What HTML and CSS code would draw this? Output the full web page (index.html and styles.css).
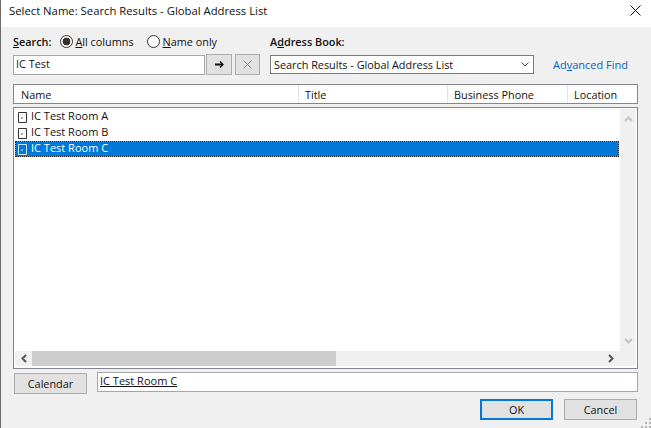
FILE: index.html
```html
<!DOCTYPE html>
<html lang="en">

<head>
    <meta charset="UTF-8">
    <title>Select Name</title>
    <link rel="stylesheet" href="styles.css">
</head>

<body>
    <div class="dialog">
        <div class="titlebar">
            <span class="title">Select Name: Search Results - Global Address List</span>
            <svg class="close" width="11" height="11" viewBox="0 0 11 11"><path d="M.5.5l10 10M10.5.5l-10 10" stroke="#111" fill="none"/></svg>
        </div>

        <div class="content">
            <div class="labels">
                <div class="search-labels">
                    <b class="label"><u>S</u>earch:</b>
                    <span class="radio checked"></span>
                    <span class="radio-text"><u>A</u>ll columns</span>
                    <span class="radio second"></span>
                    <span class="radio-text"><u>N</u>ame only</span>
                </div>
                <b class="label">A<u>d</u>dress Book:</b>
            </div>

            <div class="controls">
                <div class="search-input">IC Test</div>
                <button class="icon-btn">
                    <svg width="9" height="7" viewBox="0 0 9 7"><path d="M0 3.500h7" stroke="#111" stroke-width="2" fill="none"/><path d="M5 .5l3 3-3 3" stroke="#111" stroke-width="1.300" fill="none"/></svg>
                </button>
                <button class="icon-btn clear">
                    <svg width="9" height="9" viewBox="0 0 9 9"><path d="M.5.5l8 8M8.5.5l-8 8" stroke="#7d8a98" fill="none"/></svg>
                </button>
                <div class="select">
                    <span>Search Results - Global Address List</span>
                    <svg width="8" height="5" viewBox="0 0 8 5"><path d="M.5.5L4 4 7.500.5" stroke="#444" fill="none"/></svg>
                </div>
                <a class="advanced">Ad<u>v</u>anced Find</a>
            </div>

            <div class="header">
                <div class="col col-name">Name</div>
                <div class="col col-title">Title</div>
                <div class="col col-phone">Business Phone</div>
                <div class="col col-location">Location</div>
            </div>

            <div class="list">
                <div class="list-main">
                    <div class="rows">
                        <div class="row">
                            <svg class="entry-icon" width="9" height="11" viewBox="0 0 9 11"><path d="M.5.5h8v10h-8z" fill="none" stroke="#333"/><path d="M3 6h2" stroke="#555"/></svg>
                            <span class="row-text">IC Test Room A</span>
                        </div>
                        <div class="row">
                            <svg class="entry-icon" width="9" height="11" viewBox="0 0 9 11"><path d="M.5.5h8v10h-8z" fill="none" stroke="#333"/><path d="M3 6h2" stroke="#555"/></svg>
                            <span class="row-text">IC Test Room B</span>
                        </div>
                        <div class="row selected">
                            <svg class="entry-icon" width="9" height="11" viewBox="0 0 9 11"><path d="M.5.5h8v10h-8z" fill="none" stroke="#cfe4f7"/><path d="M3 6h2" stroke="#cfe4f7"/></svg>
                            <span class="row-text">IC Test Room C</span>
                        </div>
                    </div>
                    <div class="vscroll">
                        <svg width="9" height="6" viewBox="0 0 9 6"><path d="M1 5l3.500-3.500L8 5" stroke="#c4c4c4" stroke-width="2" fill="none"/></svg>
                        <svg width="9" height="6" viewBox="0 0 9 6"><path d="M1 1l3.500 3.500L8 1" stroke="#c4c4c4" stroke-width="2" fill="none"/></svg>
                    </div>
                </div>
                <div class="hscroll">
                    <div class="arrow-box">
                        <svg width="6" height="9" viewBox="0 0 6 9"><path d="M5 1L1.500 4.500 5 8" stroke="#555" stroke-width="2" fill="none"/></svg>
                    </div>
                    <div class="thumb"></div>
                    <div class="arrow-box end">
                        <svg width="6" height="9" viewBox="0 0 6 9"><path d="M1 1l3.500 3.500L1 8" stroke="#555" stroke-width="2" fill="none"/></svg>
                    </div>
                </div>
            </div>

            <div class="recipient">
                <button class="btn">Calendar</button>
                <div class="recipient-input"><u>IC Test Room C</u></div>
            </div>

            <div class="actions">
                <button class="btn default">OK</button>
                <button class="btn">Cancel</button>
            </div>
        </div>

        <svg class="grip" width="10" height="10" viewBox="0 0 10 10" fill="#b5b5b5">
            <rect x="8" y="0" width="2" height="2"/>
            <rect x="4" y="4" width="2" height="2"/>
            <rect x="8" y="4" width="2" height="2"/>
            <rect x="0" y="8" width="2" height="2"/>
            <rect x="4" y="8" width="2" height="2"/>
            <rect x="8" y="8" width="2" height="2"/>
        </svg>
    </div>
</body>

</html>
```

FILE: styles.css
```css
* {
    margin: 0;
    padding: 0;
    box-sizing: border-box;
    font-family: "Open Sans", "Noto Sans", sans-serif;
}

html,
body {
    width: 651px;
    height: 428px;
    overflow: hidden;
}

.dialog {
    position: relative;
    height: 428px;
    background: #f0f0f0;
    border-left: 1px solid #6b6b6b;
    font-size: 10.85px;
    color: #111;
}

.titlebar {
    display: flex;
    align-items: center;
    justify-content: space-between;
    height: 27px;
    padding: 0 10px 6px 8px;
    background: #fff;
}

.title {
    font-size: 11.3px;
}

.content {
    padding: 8px 13px 0 12px;
}

.labels {
    display: flex;
    align-items: center;
    height: 16px;
    padding-bottom: 4px;
}

.search-labels {
    display: flex;
    align-items: center;
    width: 257px;
}

.label {
    font-weight: 600;
}

.radio {
    width: 13px;
    height: 13px;
    margin-left: 9px;
    margin-right: 2px;
    border: 1px solid #333;
    border-radius: 50%;
    background: #fff;
}

.radio.second {
    margin-left: 13px;
    margin-right: 3px;
}

.radio.checked {
    background: radial-gradient(circle, #333 0 3.6px, #fff 4.2px);
}

.controls {
    display: flex;
    align-items: center;
    height: 21px;
    margin-top: 3px;
}

.search-input {
    width: 192px;
    height: 20px;
    padding: 0 2px;
    border: 1px solid #a6a6a6;
    background: #fff;
}

.icon-btn {
    display: flex;
    align-items: center;
    justify-content: center;
    width: 26px;
    height: 21px;
    margin-left: 1px;
    border: 1px solid #adadad;
    background: #e1e1e1;
}

.icon-btn.clear {
    width: 25px;
    margin-left: 3px;
}

.select {
    display: flex;
    align-items: center;
    justify-content: space-between;
    width: 264px;
    height: 19px;
    margin-left: 10px;
    padding: 0 4px 0 3px;
    border: 1px solid #7a7a7a;
    background: #fff;
}

.advanced {
    margin-left: 19px;
    color: #0563c1;
    font-size: 11px;
}

.header {
    display: flex;
    height: 20px;
    margin-top: 9px;
    border: 1px solid #82878f;
    background: #fff;
}

.col {
    height: 100%;
    padding: 2px 0 0 6px;
    border-right: 1px solid #e3e3e3;
}

.col-name {
    width: 285px;
    padding-left: 7px;
}

.col-title {
    width: 149px;
}

.col-phone {
    width: 120px;
}

.col-location {
    flex: 1;
    border-right: none;
}

.list {
    display: flex;
    flex-direction: column;
    height: 262px;
    margin-top: 3px;
    padding: 1px 1px 2px 1px;
    border: 1px solid #82878f;
    background: #fff;
}

.list-main {
    display: flex;
    flex: 1;
}

.rows {
    flex: 1;
    margin-right: 1px;
}

.row {
    display: flex;
    align-items: center;
    gap: 4px;
    height: 16px;
    padding-left: 3px;
}

.row-text {
    margin-bottom: 3px;
    font-size: 11px;
}

.row.selected {
    padding-left: 2px;
    border: 1px dotted #222;
    background: linear-gradient(#0078d7, #0078d7) padding-box, linear-gradient(#f08a00, #f08a00) border-box;
    color: #fff;
}

.vscroll {
    display: flex;
    flex-direction: column;
    align-items: center;
    justify-content: space-between;
    width: 16px;
    padding: 7px 0;
    background: #f0f0f0;
}

.hscroll {
    display: flex;
    height: 15px;
    background: #f0f0f0;
}

.arrow-box {
    display: flex;
    align-items: center;
    justify-content: center;
    width: 17px;
}

.arrow-box.end {
    margin-left: auto;
    margin-right: 17px;
}

.thumb {
    width: 304px;
    background: #cdcdcd;
}

.recipient {
    display: flex;
    align-items: flex-start;
    margin-top: 3px;
}

.recipient-input {
    flex: 1;
    height: 20px;
    margin-left: 10px;
    padding: 0 2px;
    border: 1px solid #a6a6a6;
    background: #fff;
    font-size: 11px;
}

.btn {
    width: 73px;
    height: 21px;
    margin-left: 1px;
    margin-top: 1px;
    border: 1px solid #adadad;
    background: #e1e1e1;
    font-size: 10.85px;
    color: #111;
}

.btn.default {
    border: 2px solid #0078d7;
}

.actions {
    display: flex;
    justify-content: flex-end;
    gap: 10px;
    margin-top: 4px;
    padding-right: 1px;
}

.grip {
    position: absolute;
    right: 0;
    bottom: 0;
}
```
